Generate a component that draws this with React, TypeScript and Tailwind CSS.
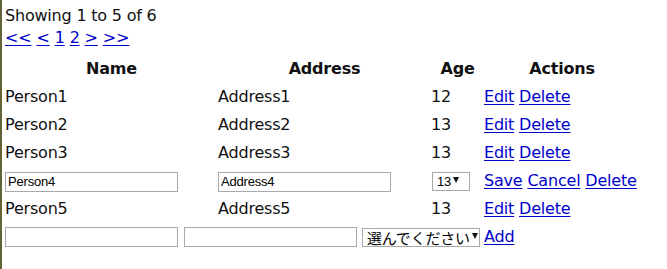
import React from "react";

type Person = { name: string; address: string; age: number; editing?: boolean };

const people: Person[] = [
  { name: "Person1", address: "Address1", age: 12 },
  { name: "Person2", address: "Address2", age: 13 },
  { name: "Person3", address: "Address3", age: 13 },
  { name: "Person4", address: "Address4", age: 13, editing: true },
  { name: "Person5", address: "Address5", age: 13 },
];

const linkCls = "text-[#0000cc] underline underline-offset-[2px]";
const inputCls =
  "h-[20px] w-[173px] border border-[#a9a9a9] bg-white px-[2px] text-[13px] text-black font-['Liberation_Sans',Arial,sans-serif] outline-none";

function Caret() {
  return (
    <svg
      className="pointer-events-none absolute top-[5px]"
      width="6"
      height="6"
      viewBox="0 0 6 6"
      style={{ right: 0 }}
    >
      <polygon points="0,0 6,0 3,6" fill="#111" />
    </svg>
  );
}

function FakeSelect({
  value,
  width,
  caretRight,
  jp,
}: {
  value: string;
  width: number;
  caretRight: number;
  jp?: boolean;
}) {
  return (
    <span className="relative inline-block align-middle" style={{ width }}>
      <select
        defaultValue={value}
        className={`block h-[19px] w-full appearance-none border border-[#a9a9a9] bg-white py-0 text-black outline-none ${
          jp
            ? "pl-[4px] pr-[1px] text-[15px] leading-[17px] font-['Noto_Sans_CJK_JP','Liberation_Sans',sans-serif]"
            : "pl-[4px] pr-[12px] text-[13px] leading-[17px] font-['Liberation_Sans',Arial,sans-serif]"
        }`}
      >
        <option value={value}>{value}</option>
      </select>
      <span className="absolute inset-y-0" style={{ right: caretRight }}>
        <Caret />
      </span>
    </span>
  );
}

export default function App() {
  return (
    <div className="min-h-[269px] border-l-2 border-[#63633a] bg-white pl-[3px] pt-[5px] font-['DejaVu_Sans',Verdana,sans-serif] text-[16px] tracking-[-0.2px] text-[#111]">
      <div className="h-[22px] leading-[22px]">Showing 1 to 5 of 6</div>
      <div className="flex h-[22px] items-center gap-[5px] leading-[22px]">
        <a href="#" className={linkCls}>&lt;&lt;</a>
        <a href="#" className={linkCls}>&lt;</a>
        <a href="#" className={linkCls}>1</a>
        <a href="#" className={linkCls}>2</a>
        <a href="#" className={linkCls}>&gt;</a>
        <a href="#" className={linkCls}>&gt;&gt;</a>
      </div>

      <table className="mt-[6px] table-fixed border-collapse">
        <colgroup>
          <col className="w-[213px]" />
          <col className="w-[213px]" />
          <col className="w-[53px]" />
          <col className="w-[156px]" />
        </colgroup>
        <thead>
          <tr className="h-[28px]">
            <th className="p-0 text-center font-bold">Name</th>
            <th className="p-0 text-center font-bold">Address</th>
            <th className="p-0 text-center font-bold">Age</th>
            <th className="p-0 text-center font-bold">Actions</th>
          </tr>
        </thead>
        <tbody>
          {people.map((p) =>
            p.editing ? (
              <tr key={p.name} className="h-[28px]">
                <td className="p-0">
                  <input className={inputCls} defaultValue={p.name} />
                </td>
                <td className="p-0">
                  <input className={inputCls} defaultValue={p.address} />
                </td>
                <td className="p-0 pl-[1px]">
                  <FakeSelect value={String(p.age)} width={38} caretRight={11} />
                </td>
                <td className="p-0">
                  <a href="#" className={linkCls}>Save</a>{" "}
                  <a href="#" className={linkCls}>Cancel</a>{" "}
                  <a href="#" className={linkCls}>Delete</a>
                </td>
              </tr>
            ) : (
              <tr key={p.name} className="h-[28px]">
                <td className="p-0">{p.name}</td>
                <td className="p-0">{p.address}</td>
                <td className="p-0">{p.age}</td>
                <td className="p-0">
                  <a href="#" className={linkCls}>Edit</a>{" "}
                  <a href="#" className={linkCls}>Delete</a>
                </td>
              </tr>
            )
          )}
        </tbody>
      </table>

      <div className="flex h-[28px] items-center">
        <input className={inputCls} />
        <input className={`${inputCls} ml-[6px]`} />
        <span className="ml-[5px] flex">
          <FakeSelect value="選んでください" width={118} caretRight={2} jp />
        </span>
        <a href="#" className={`${linkCls} ml-[4px]`}>Add</a>
      </div>
    </div>
  );
}
